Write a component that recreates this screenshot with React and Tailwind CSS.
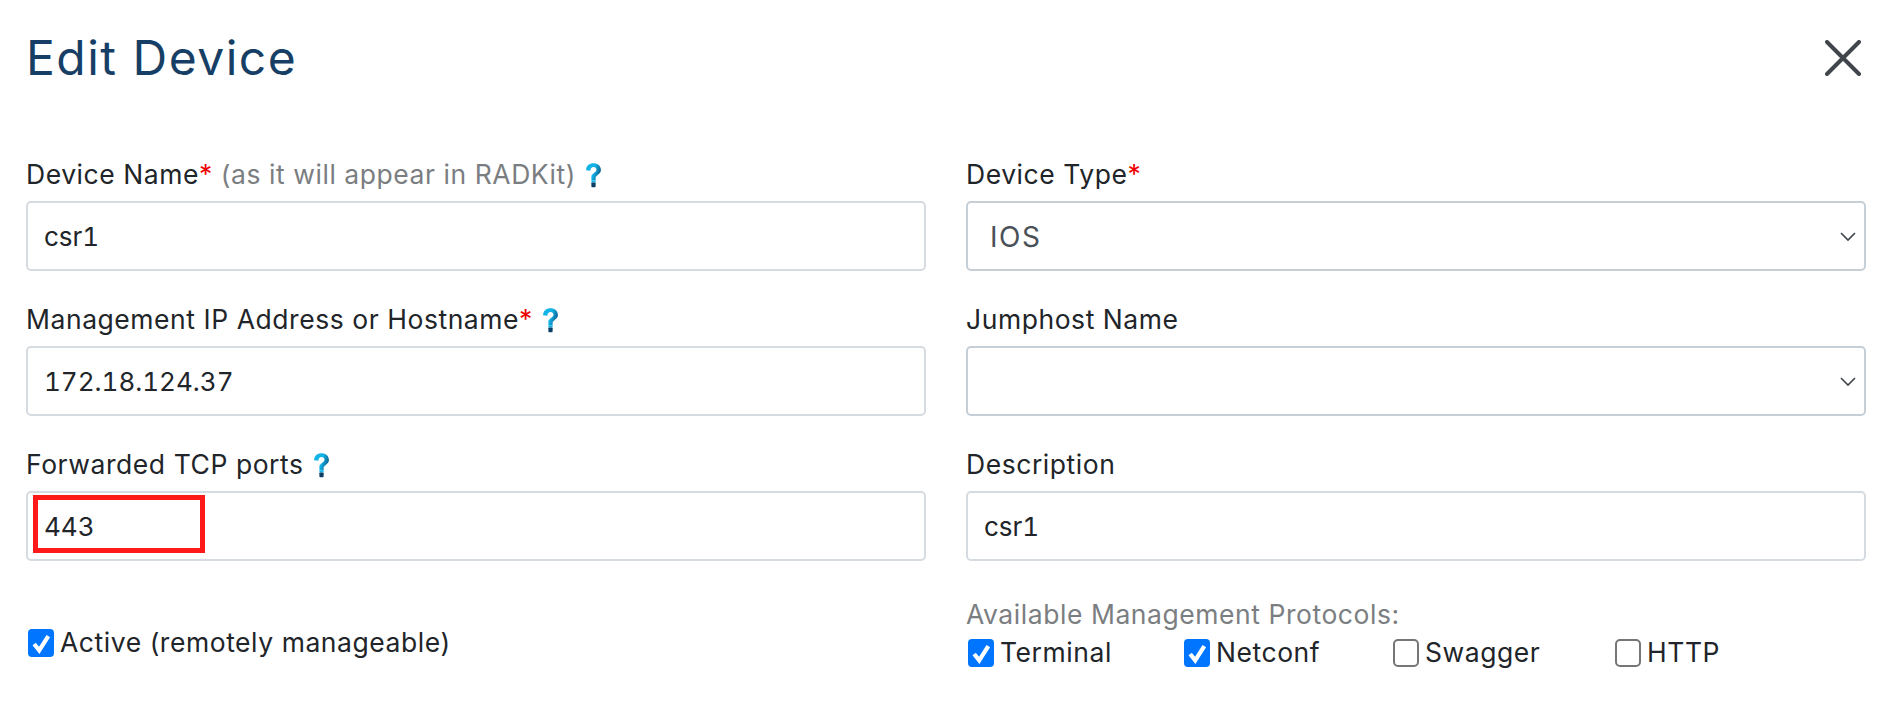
const font = { fontFamily: 'Inter, "Liberation Sans", sans-serif' };

function Help() {
  return (
    <svg viewBox="0 0 16 24" className="inline-block ml-[9px] w-[17px] h-[26px] align-[-4px]">
      <defs>
        <linearGradient id="q" x1="0" y1="0" x2="1" y2="0.3">
          <stop offset="0" stopColor="#12b4e8" />
          <stop offset="0.6" stopColor="#12b4e8" />
          <stop offset="1" stopColor="#0b6a98" />
        </linearGradient>
      </defs>
      <path d="M1 7.500C1 3.500 4.200 1 8 1s7 2.500 7 6.500c0 3.500-4.500 4.500-5 7v2.500H6v-3.500c0-3 4.800-3.800 4.800-6.500 0-1.500-1.200-2.500-2.800-2.500S5 6 5 8z" fill="url(#q)" />
      <rect x="6" y="17" width="4" height="2" fill="#12b4e8" />
      <rect x="6" y="19" width="4" height="4.500" rx="0.800" fill="#0b3f66" />
    </svg>
  );
}

function Req() {
  return <span className="text-[#ee0000]">*</span>;
}

function Field({ label, value, overlay }) {
  return (
    <div className="flex flex-col">
      <div className="h-[31px] leading-[31px] text-[26.5px] tracking-[0.55px] text-[#212529] whitespace-nowrap">{label}</div>
      <div className="mt-[11px] h-[70px] border-2 border-[#d5dbe0] rounded-[5px] pl-[16px] flex items-center text-[26px] text-[#212529] tabular-nums bg-white relative">
        {value}
        {overlay}
      </div>
    </div>
  );
}

function SelectField({ label, value }) {
  return (
    <div className="flex flex-col">
      <div className="h-[31px] leading-[31px] text-[26.5px] tracking-[0.55px] text-[#212529] whitespace-nowrap">{label}</div>
      <div className="mt-[11px] h-[70px] border-2 border-[#c6ced6] rounded-[5px] pl-[22px] pr-[8px] pt-[1px] flex items-center justify-between text-[28px] tracking-[1.5px] text-[#495057] bg-white">
        <span>{value}</span>
        <svg viewBox="0 0 16 10" className="w-[16px] h-[10px]" fill="none" stroke="#40464c" strokeWidth="1.6">
          <path d="M1 1l7 7 7-7" />
        </svg>
      </div>
    </div>
  );
}

function Check({ checked }) {
  if (checked) {
    return (
      <span className="w-[26px] h-[28px] rounded-[4px] bg-[#0075ff] flex items-center justify-center shrink-0">
        <svg viewBox="0 0 20 20" className="w-[21px] h-[21px]" fill="none" stroke="#ffffff" strokeWidth="4">
          <path d="M3 10.500l4.800 6L16.500 3" />
        </svg>
      </span>
    );
  }
  return <span className="w-[26px] h-[28px] rounded-[5px] border-2 border-[#767676] bg-white shrink-0" />;
}

function CheckLabel({ checked, text, className }) {
  return (
    <div className={`flex items-center gap-[6px] text-[26.5px] tracking-[0.55px] text-[#212529] ${className || ''}`}>
      <Check checked={checked} />
      <span className="leading-[28px] relative top-[-1px]">{text}</span>
    </div>
  );
}

export default function App() {
  return (
    <div style={font} className="w-[1892px] h-[702px] bg-white overflow-hidden px-[26px]">
      <div className="h-[159px] flex justify-between pt-[30px]">
        <h1 className="text-[48px] leading-[56px] text-[#173f66] tracking-[1.5px] font-normal">Edit Device</h1>
        <svg viewBox="0 0 36 36" className="w-[36px] h-[36px] mt-[10px] mr-[5px]" fill="none" stroke="#40464c" strokeWidth="4" strokeLinecap="round">
          <path d="M2 2l32 32M34 2L2 34" />
        </svg>
      </div>
      <div className="grid grid-cols-[900px_900px] gap-x-[40px]">
        <div className="flex flex-col gap-[33px]">
          <Field
            label={<>Device Name<Req /> <span className="text-[#7b7e81]">(as it will appear in RADKit)</span><Help /></>}
            value="csr1"
          />
          <Field label={<>Management IP Address or Hostname<Req /><Help /></>} value="172.18.124.37" />
          <Field
            label={<>Forwarded TCP ports<Help /></>}
            value="443"
            overlay={<div className="absolute left-[5px] top-[2px] w-[172px] h-[58px] border-[5px] border-[#ff1a1a]" />}
          />
          <CheckLabel checked text="Active (remotely manageable)" className="mt-[35px] ml-[2px]" />
        </div>
        <div className="flex flex-col gap-[33px]">
          <SelectField label={<>Device Type<Req /></>} value="IOS" />
          <SelectField label="Jumphost Name" />
          <Field label="Description" value="csr1" />
          <div className="flex flex-col">
            <div className="text-[26.5px] tracking-[0.55px] leading-[31px] text-[#7b7e81] mt-[5px]">Available Management Protocols:</div>
            <div className="flex mt-[9px] ml-[2px]">
              <CheckLabel checked text="Terminal" className="w-[216px]" />
              <CheckLabel checked text="Netconf" className="w-[209px]" />
              <CheckLabel text="Swagger" className="w-[222px]" />
              <CheckLabel text="HTTP" />
            </div>
          </div>
        </div>
      </div>
    </div>
  );
}
